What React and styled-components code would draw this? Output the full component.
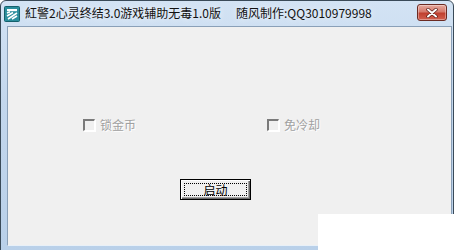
import React from "react";
import styled, { createGlobalStyle } from "styled-components";

const Global = createGlobalStyle`
  html, body { margin: 0; padding: 0; background: #ffffff; }
  body { width: 454px; height: 250px; overflow: hidden; font-family: "Noto Sans CJK SC", "Noto Sans", sans-serif; }
  #root { width: 454px; height: 250px; }
`;

const Screen = styled.div`
  position: relative;
  width: 454px;
  height: 250px;
  overflow: hidden;
  background: #ffffff;
`;

const Window = styled.div`
  box-sizing: border-box;
  width: 454px;
  height: 251px;
  display: flex;
  flex-direction: column;
  border: 1px solid #3a4a58;
  border-radius: 6px 6px 0 0;
  background: linear-gradient(180deg, #d3e3f4 0%, #c3d7ed 40%, #b9d0e9 100%);
`;

const TitleBar = styled.div`
  height: 24px;
  display: flex;
  align-items: center;
  padding: 0 6px 0 3px;
  box-sizing: border-box;
  position: relative;
`;

const AppIcon = styled.svg`
  width: 16px;
  height: 16px;
  flex: none;
  margin-top: 1px;
`;

const TitleText = styled.span`
  font-family: "Noto Sans CJK SC", sans-serif;
  font-size: 12px;
  line-height: 16px;
  color: #111;
  margin-left: ${(p) => p.$gap}px;
  white-space: nowrap;
  text-shadow: 0 0 6px rgba(255,255,255,0.9);
  letter-spacing: ${(p) => p.$ls || 0}px;
`;

const CloseBtn = styled.div`
  position: absolute;
  right: 6px;
  top: 3px;
  width: 30px;
  height: 17px;
  box-sizing: border-box;
  border: 1px solid #6b2a22;
  border-radius: 3px;
  background: linear-gradient(180deg, #e6a99e 0%, #d57a6c 45%, #c0402f 55%, #d2604f 100%);
  display: flex;
  align-items: center;
  justify-content: center;
  box-shadow: inset 0 0 0 1px rgba(255,255,255,0.35);
`;

const Frame = styled.div`
  flex: 1;
  display: flex;
  padding: 1px 3px 4px 6px;
`;

const Client = styled.div`
  flex: 1;
  background: #f0f0f0;
  border: 1px solid #8aa0b8;
  border-bottom-color: #e8f0f8;
  display: flex;
  flex-direction: column;
  padding: 91px 0 0 75px;
  box-sizing: border-box;
`;

const CheckRow = styled.div`
  display: flex;
  align-items: center;
`;

const CheckItem = styled.label`
  width: 184px;
  display: flex;
  align-items: center;
  gap: 5px;
`;

const Box = styled.span`
  width: 12px;
  height: 12px;
  box-sizing: border-box;
  border-top: 2px solid #7a7a7a;
  border-left: 2px solid #7a7a7a;
  border-right: 1px solid #ffffff;
  border-bottom: 1px solid #ffffff;
  background: #f0f0f0;
  box-shadow: 1px 1px 0 #ffffff;
`;

const Label = styled.span`
  font-family: "Noto Sans CJK SC", sans-serif;
  font-size: 12px;
  line-height: 14px;
  color: #a0a0a0;
  text-shadow: 1px 1px 0 #ffffff;
`;

const ButtonRow = styled.div`
  display: flex;
  padding-left: 97px;
  margin-top: 47px;
`;

const PushButton = styled.button`
  width: 71px;
  height: 21px;
  box-sizing: border-box;
  padding: 0;
  border: 1px solid #000;
  background: #f0f0f0;
  box-shadow: inset 1px 1px 0 #ffffff, inset -1px -1px 0 #696969, inset -2px -2px 0 #a0a0a0;
  display: flex;
  align-items: stretch;
  justify-content: stretch;
  padding: 3px;
`;

const Focus = styled.span`
  flex: 1;
  border: 1px dotted #000;
  display: flex;
  align-items: center;
  justify-content: center;
  font-family: "Noto Sans CJK SC", sans-serif;
  font-size: 12px;
  line-height: 12px;
  color: #000;
`;

const WhitePatch = styled.div`
  position: absolute;
  left: 318px;
  top: 214px;
  width: 136px;
  height: 36px;
  background: #ffffff;
`;

export default function App() {
  return (
    <>
      <Global />
      <Screen>
        <Window>
          <TitleBar>
            <AppIcon viewBox="0 0 16 16">
              <rect x="0.5" y="0.5" width="15" height="15" rx="1" fill="#2a8e9c" stroke="#15606c" />
              <path d="M3 3h10v2.2H3z" fill="#ffffff" />
              <path d="M3 7l3-1.2M3 10l6-3.5M4 13l9-6M8 13l5-3" stroke="#ffffff" strokeWidth="1.6" />
            </AppIcon>
            <TitleText $gap={5}>紅警2心灵终结3.0游戏辅助无毒1.0版</TitleText>
            <TitleText $gap={15}>随风制作:QQ3010979998</TitleText>
            <CloseBtn>
              <svg width="12" height="10" viewBox="0 0 12 10">
                <path d="M2 1.5l8 7M10 1.5l-8 7" stroke="#5a1a14" strokeWidth="3.4" strokeLinecap="round" />
                <path d="M2 1.5l8 7M10 1.5l-8 7" stroke="#ffffff" strokeWidth="2" strokeLinecap="round" />
              </svg>
            </CloseBtn>
          </TitleBar>
          <Frame>
            <Client>
              <CheckRow>
                <CheckItem>
                  <Box />
                  <Label>锁金币</Label>
                </CheckItem>
                <CheckItem>
                  <Box />
                  <Label>免冷却</Label>
                </CheckItem>
              </CheckRow>
              <ButtonRow>
                <PushButton>
                  <Focus>启动</Focus>
                </PushButton>
              </ButtonRow>
            </Client>
          </Frame>
        </Window>
        <WhitePatch />
      </Screen>
    </>
  );
}
